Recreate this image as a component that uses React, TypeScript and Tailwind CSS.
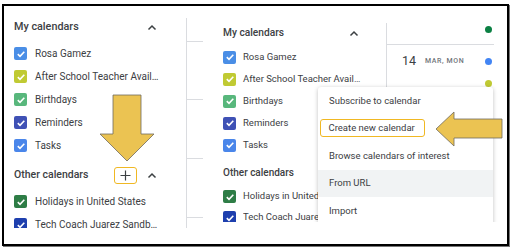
import React from "react";

const Chevron = () => (
  <svg width="10" height="7" viewBox="0 0 10 7" className="shrink-0">
    <path d="M1.5 5.5 L5 2 L8.5 5.5" fill="none" stroke="#3c4043" strokeWidth="1.5" />
  </svg>
);

const Check = ({ color, size }: { color: string; size: number }) => (
  <div className="flex items-center justify-center rounded-[2px] shrink-0" style={{ background: color, width: size, height: size }}>
    <svg width={size - 3} height={size - 3} viewBox="0 0 10 10">
      <path d="M1.8 5.2 L4 7.3 L8.3 2.8" fill="none" stroke="#fff" strokeWidth="1.6" />
    </svg>
  </div>
);

const myCals = [
  { name: "Rosa Gamez", color: "#4a8ee6" },
  { name: "After School Teacher Avail\u2026", color: "#c0ca33" },
  { name: "Birthdays", color: "#58b77c" },
  { name: "Reminders", color: "#3f51b5" },
  { name: "Tasks", color: "#4a86ea" },
];
const otherCals = [
  { name: "Holidays in United States", color: "#2e7d46" },
  { name: "Tech Coach Juarez Sandb\u2026", color: "#1e3fae" },
];

function LeftShot() {
  return (
    <div className="w-[199px] h-[222px] overflow-hidden flex shrink-0">
      <div className="w-[182px] pl-[10px] pt-[9px] shrink-0">
        <div className="h-[24px] flex items-center pr-[29px]">
          <span className="text-[10.8px] font-medium text-[#3c4043]">My calendars</span>
          <div className="ml-auto"><Chevron /></div>
        </div>
        <div className="mt-[3px]">
          {myCals.map((c) => (
            <div key={c.name} className="h-[23px] flex items-center gap-[8px]">
              <Check color={c.color} size={13} />
              <span className="text-[10px] text-[#3c4043] whitespace-nowrap">{c.name}</span>
            </div>
          ))}
        </div>
        <div className="h-[24px] mt-[6px] flex items-center pr-[29px]">
          <span className="text-[10.5px] font-medium text-[#3c4043]">Other calendars</span>
          <div className="ml-auto mr-[10px] w-[23px] h-[17px] border-[1.5px] border-[#f0b823] rounded-[3px] flex items-center justify-center">
            <svg width="11" height="11" viewBox="0 0 11 11">
              <path d="M5.5 0.5 V10.5 M0.5 5.5 H10.5" stroke="#3c4043" strokeWidth="1.2" />
            </svg>
          </div>
          <Chevron />
        </div>
        <div className="mt-[3px]">
          {otherCals.map((c) => (
            <div key={c.name} className="h-[23px] flex items-center gap-[8px]">
              <Check color={c.color} size={13} />
              <span className="text-[10px] text-[#3c4043] whitespace-nowrap">{c.name}</span>
            </div>
          ))}
        </div>
      </div>
      <div className="flex-1 mt-[12px] border-l border-[#dadce0]">
        <div className="h-[24px] border-b border-[#dadce0]" />
        <div className="h-[58px] border-b border-[#dadce0]" />
        <div className="h-[59px] border-b border-[#dadce0]" />
        <div className="h-[59px] border-b border-[#dadce0]" />
      </div>
    </div>
  );
}

const menuItems = ["Subscribe to calendar", "Create new calendar", "Browse calendars of interest", "From URL", "Import"];

function RightShot() {
  return (
    <div className="relative ml-[5px] w-[298px] h-[216px] overflow-hidden flex shrink-0">
      <div className="w-[178px] pl-[15px] pt-[16px] shrink-0">
        <div className="h-[22px] flex items-center pr-[27px]">
          <span className="text-[10.2px] font-medium text-[#3c4043]">My calendars</span>
          <div className="ml-auto"><Chevron /></div>
        </div>
        <div className="mt-[2px]">
          {myCals.map((c) => (
            <div key={c.name} className="h-[22px] flex items-center gap-[7px]">
              <Check color={c.color} size={13} />
              <span className="text-[9.5px] text-[#3c4043] whitespace-nowrap">{c.name}</span>
            </div>
          ))}
        </div>
        <div className="h-[22px] mt-[5px] flex items-center">
          <span className="text-[10px] font-medium text-[#3c4043]">Other calendars</span>
        </div>
        <div className="mt-[3px]">
          {otherCals.map((c) => (
            <div key={c.name} className="h-[21px] flex items-center gap-[7px]">
              <Check color={c.color} size={13} />
              <span className="text-[9.5px] text-[#3c4043] whitespace-nowrap w-[75px] overflow-hidden">{c.name}</span>
            </div>
          ))}
        </div>
      </div>
      <div className="flex-1 mt-[17px]">
        <div className="w-[108px] h-full border-l border-[#dadce0]">
          <div className="h-[22px] border-b border-[#dadce0] flex justify-end items-start pt-[3px]">
            <div className="w-[7px] h-[7px] rounded-full bg-[#0b8043] mr-[2.5px]" />
          </div>
          <div className="h-[32px] flex items-center pl-[15px]">
            <span className="text-[12.5px] text-[#3c4043]">14</span>
            <span className="ml-[9px] text-[7px] tracking-[0.6px] text-[#70757a] font-medium">MAR, MON</span>
            <div className="ml-auto w-[7px] h-[7px] rounded-full bg-[#4285f4] mr-[2.5px]" />
          </div>
          <div className="h-[12px] flex justify-end items-center">
            <div className="w-[7px] h-[7px] rounded-full bg-[#c0ca33] mr-[2.5px]" />
          </div>
        </div>
      </div>
      <div className="absolute left-[110px] top-[81px] w-[175px] h-[150px] bg-white shadow-[0_1px_4px_rgba(0,0,0,0.25)] rounded-[3px]">
        {menuItems.map((m) =>
          m === "Create new calendar" ? (
            <div key={m} className="h-[27.5px] flex items-center px-[2px]">
              <span className="h-[18px] w-[105px] border-[1.5px] border-[#f0b823] rounded-[3px] flex items-center pl-[7.5px] text-[9.5px] text-[#3c4043] whitespace-nowrap">{m}</span>
            </div>
          ) : (
            <div key={m} className={`h-[27.5px] flex items-center pl-[11px] text-[9.5px] text-[#3c4043] whitespace-nowrap ${m === "From URL" ? "bg-[#f1f3f4]" : ""}`}>
              {m}
            </div>
          )
        )}
      </div>
    </div>
  );
}

export default function App() {
  return (
    <div className="relative w-[512px] h-[250px] bg-white overflow-hidden font-['Roboto',sans-serif]">
      <div className="absolute left-[2px] top-[4px] w-[507px] h-[242px] border-2 border-black shadow-[1px_1px_0_#777]">
        <div className="flex">
          <LeftShot />
          <RightShot />
        </div>
      </div>
      <svg className="absolute inset-0" width="512" height="250" viewBox="0 0 512 250">
        <polygon points="113,95 141,95 141,134 154,134 127,161 100,134 113,134" fill="#ebc352" stroke="#6e6a5e" strokeWidth="0.8" />
        <polygon points="436,129 454,112 454,119 502,119 502,138 454,138 454,146" fill="#ebc352" stroke="#6e6a5e" strokeWidth="0.8" />
      </svg>
    </div>
  );
}
